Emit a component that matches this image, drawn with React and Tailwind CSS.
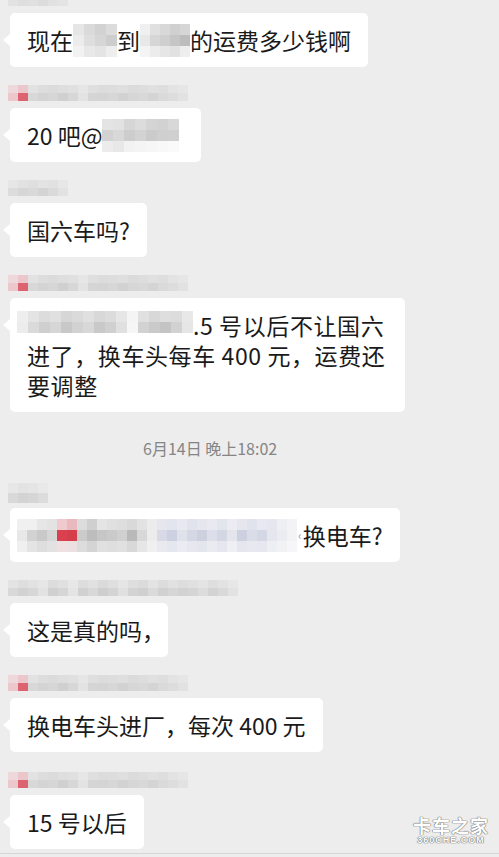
import React from 'react';

// pixelated "mosaic" blocks that hide names in the screenshot
const Mosaic = ({ rows, cell, className = '' }) => (
    <span className={`flex shrink-0 flex-col ${className}`}>
        {rows.map((row, i) => (
            <span key={i} className="flex">
                {row.map((c, j) => (
                    <span key={j} className={`${cell} ${c}`} />
                ))}
            </span>
        ))}
    </span>
);

const nameRed = [
    ['bg-[#efd8db]', 'bg-[#ebc6cb]', 'bg-[#e2e2e2]', 'bg-[#dddddd]', 'bg-[#dbdbdb]', 'bg-[#dedede]', 'bg-[#e0e0e0]', 'bg-[#e6e6e6]', 'bg-[#dfdfdf]', 'bg-[#dcdcdc]', 'bg-[#dddddd]', 'bg-[#dfdfdf]', 'bg-[#dbdbdb]', 'bg-[#dddddd]', 'bg-[#e0e0e0]', 'bg-[#dedede]', 'bg-[#e3e3e3]', 'bg-[#e6e6e6]'],
    ['bg-[#ecc8cc]', 'bg-[#dc6470]', 'bg-[#d8d8d8]', 'bg-[#d4d4d4]', 'bg-[#d6d6d6]', 'bg-[#d0d0d0]', 'bg-[#d7d7d7]', 'bg-[#e3e3e3]', 'bg-[#d5d5d5]', 'bg-[#d4d4d4]', 'bg-[#d7d7d7]', 'bg-[#d2d2d2]', 'bg-[#d6d6d6]', 'bg-[#d8d8d8]', 'bg-[#d4d4d4]', 'bg-[#dadada]', 'bg-[#dddddd]', 'bg-[#e2e2e2]'],
];

const nameTop = [
    ['bg-[#e2e2e2]', 'bg-[#dedede]', 'bg-[#e0e0e0]', 'bg-[#dcdcdc]', 'bg-[#e1e1e1]', 'bg-[#e4e4e4]'],
];

const nameShort = [
    ['bg-[#e6e6e6]', 'bg-[#e2e2e2]', 'bg-[#dfdfdf]', 'bg-[#e3e3e3]', 'bg-[#e1e1e1]', 'bg-[#e7e7e7]'],
    ['bg-[#dcdcdc]', 'bg-[#d6d6d6]', 'bg-[#d9d9d9]', 'bg-[#d4d4d4]', 'bg-[#dadada]', 'bg-[#e2e2e2]'],
];

const nameTiny = [
    ['bg-[#e7e7e7]', 'bg-[#e3e3e3]', 'bg-[#e5e5e5]', 'bg-[#e9e9e9]'],
    ['bg-[#d9d9d9]', 'bg-[#d3d3d3]', 'bg-[#d6d6d6]', 'bg-[#dcdcdc]'],
];

const nameLong = [
    ['bg-[#e3e3e3]', 'bg-[#dedede]', 'bg-[#e2e2e2]', 'bg-[#e6e6e6]', 'bg-[#dcdcdc]', 'bg-[#e0e0e0]', 'bg-[#e7e7e7]', 'bg-[#dddddd]', 'bg-[#e1e1e1]', 'bg-[#dadada]', 'bg-[#dfdfdf]', 'bg-[#e5e5e5]', 'bg-[#dedede]', 'bg-[#dbdbdb]', 'bg-[#e3e3e3]', 'bg-[#dcdcdc]', 'bg-[#e1e1e1]', 'bg-[#dddddd]', 'bg-[#e0e0e0]', 'bg-[#e4e4e4]', 'bg-[#dedede]', 'bg-[#e2e2e2]', 'bg-[#e7e7e7]'],
    ['bg-[#d8d8d8]', 'bg-[#d2d2d2]', 'bg-[#d7d7d7]', 'bg-[#e2e2e2]', 'bg-[#d0d0d0]', 'bg-[#d6d6d6]', 'bg-[#e4e4e4]', 'bg-[#d1d1d1]', 'bg-[#d8d8d8]', 'bg-[#cecece]', 'bg-[#d4d4d4]', 'bg-[#e0e0e0]', 'bg-[#d3d3d3]', 'bg-[#d0d0d0]', 'bg-[#dadada]', 'bg-[#d1d1d1]', 'bg-[#d6d6d6]', 'bg-[#d2d2d2]', 'bg-[#d5d5d5]', 'bg-[#dcdcdc]', 'bg-[#d3d3d3]', 'bg-[#d9d9d9]', 'bg-[#e2e2e2]'],
];

const blurA = [
    ['bg-[#e6e6e6]', 'bg-[#dadada]', 'bg-[#d2d2d2]', 'bg-[#dcdcdc]'],
    ['bg-[#ececec]', 'bg-[#dedede]', 'bg-[#d6d6d6]', 'bg-[#cdcdcd]'],
    ['bg-[#f2f2f2]', 'bg-[#e8e8e8]', 'bg-[#e4e4e4]', 'bg-[#eeeeee]'],
];

const blurB = [
    ['bg-[#f0f0f0]', 'bg-[#e0e0e0]', 'bg-[#d8d8d8]', 'bg-[#d0d0d0]', 'bg-[#d6d6d6]'],
    ['bg-[#e8e8e8]', 'bg-[#d6d6d6]', 'bg-[#cfcfcf]', 'bg-[#c6c6c6]', 'bg-[#bdbdbd]'],
    ['bg-[#f4f4f4]', 'bg-[#ececec]', 'bg-[#e6e6e6]', 'bg-[#e2e2e2]', 'bg-[#eeeeee]'],
];

const blurAt = [
    ['bg-[#e4e4e4]', 'bg-[#e2e2e2]', 'bg-[#d6d6d6]', 'bg-[#dcdcdc]', 'bg-[#d4d4d4]', 'bg-[#d2d2d2]', 'bg-[#d8d8d8]'],
    ['bg-[#d2d2d2]', 'bg-[#d8d8d8]', 'bg-[#cdcdcd]', 'bg-[#d3d3d3]', 'bg-[#cbcbcb]', 'bg-[#cfcfcf]', 'bg-[#d0d0d0]'],
    ['bg-[#ececec]', 'bg-[#e8e8e8]', 'bg-[#f2f2f2]', 'bg-[#f4f4f4]', 'bg-[#f6f6f6]', 'bg-[#f8f8f8]', 'bg-[#fafafa]'],
];

const blurMention = [
    ['bg-[#eeeeee]', 'bg-[#e4e4e4]', 'bg-[#dcdcdc]', 'bg-[#e0e0e0]', 'bg-[#d6d6d6]', 'bg-[#dadada]', 'bg-[#e0e0e0]', 'bg-[#d8d8d8]', 'bg-[#dcdcdc]', 'bg-[#e6e6e6]', 'bg-[#f4f4f4]', 'bg-[#e0e0e0]', 'bg-[#d8d8d8]', 'bg-[#dedede]', 'bg-[#dcdcdc]', 'bg-[#e8e8e8]'],
    ['bg-[#ececec]', 'bg-[#dadada]', 'bg-[#cfcfcf]', 'bg-[#d6d6d6]', 'bg-[#c8c8c8]', 'bg-[#d2d2d2]', 'bg-[#d8d8d8]', 'bg-[#c9c9c9]', 'bg-[#d0d0d0]', 'bg-[#e0e0e0]', 'bg-[#f6f6f6]', 'bg-[#d2d2d2]', 'bg-[#cacaca]', 'bg-[#c4c4c4]', 'bg-[#d2d2d2]', 'bg-[#e6e6e6]'],
];

const blurQuote = [
    ['bg-[#f0f0f0]', 'bg-[#f0f0f0]', 'bg-[#e6e6e6]', 'bg-[#e3e3e3]', 'bg-[#f0c9cf]', 'bg-[#eab9c0]', 'bg-[#dcdcdc]', 'bg-[#cfcfcf]', 'bg-[#e4e4e4]', 'bg-[#e0e0e0]', 'bg-[#dedede]', 'bg-[#d9d9d9]', 'bg-[#e2e2e2]', 'bg-[#ececec]', 'bg-[#e6e7ee]', 'bg-[#e3e5ee]', 'bg-[#e8e9f0]', 'bg-[#e0e2ec]', 'bg-[#e6e7ee]', 'bg-[#e9eaf1]', 'bg-[#e3e5ed]', 'bg-[#ebebf1]', 'bg-[#e6e7ee]', 'bg-[#e1e3ec]', 'bg-[#e8e9f0]', 'bg-[#e5e6ee]', 'bg-[#eeeff3]', 'bg-[#f3f3f6]'],
    ['bg-[#e8e8e8]', 'bg-[#d2d2d2]', 'bg-[#c9c9c9]', 'bg-[#d6d6d6]', 'bg-[#d9414f]', 'bg-[#d63e4c]', 'bg-[#cbcbcb]', 'bg-[#bdbdbd]', 'bg-[#c6c6c6]', 'bg-[#cacaca]', 'bg-[#d0d0d0]', 'bg-[#b9b9b9]', 'bg-[#d8d8d8]', 'bg-[#ececec]', 'bg-[#d7d9e6]', 'bg-[#ccd0e0]', 'bg-[#dfe1eb]', 'bg-[#d4d7e4]', 'bg-[#ccd0df]', 'bg-[#dcdfea]', 'bg-[#d3d6e3]', 'bg-[#e3e4ec]', 'bg-[#ccd0df]', 'bg-[#dadde8]', 'bg-[#d4d7e4]', 'bg-[#e5e6ee]', 'bg-[#ebecf1]', 'bg-[#f3f3f6]'],
    ['bg-[#f0f0f0]', 'bg-[#e4e4e4]', 'bg-[#dedede]', 'bg-[#e2e2e2]', 'bg-[#efe0e2]', 'bg-[#ece0e1]', 'bg-[#dcdcdc]', 'bg-[#d4d4d4]', 'bg-[#e0e0e0]', 'bg-[#dedede]', 'bg-[#e0e0e0]', 'bg-[#d8d8d8]', 'bg-[#e6e6e6]', 'bg-[#f0f0f0]', 'bg-[#e9eaf0]', 'bg-[#e5e7ee]', 'bg-[#ebecf1]', 'bg-[#e7e8ef]', 'bg-[#e4e6ed]', 'bg-[#eaebf1]', 'bg-[#e6e7ee]', 'bg-[#eeeef3]', 'bg-[#e6e7ee]', 'bg-[#e8e9f0]', 'bg-[#e7e8ef]', 'bg-[#eeeff3]', 'bg-[#f2f2f5]', 'bg-[#f6f6f8]'],
];

const Bubble = ({ children, className = '' }) => (
    <div className={`relative ml-[10px] rounded-[5px] bg-white px-[17px] py-[12px] text-[23px] text-[#1a1a1a] ${className}`}>
        <span className="absolute left-[-7px] top-[21px] h-0 w-0 border-y-[6px] border-r-[7px] border-y-transparent border-r-white" />
        {children}
    </div>
);

const Line = ({ children }) => (
    <div className="flex h-[30px] items-center whitespace-pre leading-[30px]">{children}</div>
);

const Name = ({ rows, cell = 'w-[10px] h-[8px]', className = 'mt-[18px] mb-[7px]' }) => (
    <div className={`ml-[8px] flex ${className}`}>
        <Mosaic rows={rows} cell={cell} />
    </div>
);

const App = () => {
    return (
        <div className="relative flex h-[857px] flex-col overflow-hidden bg-[#ededed] font-['Noto_Sans_CJK_SC',sans-serif]">
            <Name rows={nameTop} cell="w-[10px] h-[6px]" className="mb-[7px]" />
            <Bubble className="w-fit">
                <Line>
                    现在
                    <Mosaic rows={blurA} cell="w-[11px] h-[11px]" />
                    到
                    <Mosaic rows={blurB} cell="w-[10px] h-[11px]" />
                    的运费多少钱啊
                </Line>
            </Bubble>

            <Name rows={nameRed} />
            <Bubble className="w-fit pr-[22px]">
                <Line>
                    20 吧@
                    <Mosaic rows={blurAt} cell="w-[11px] h-[11px]" />
                </Line>
            </Bubble>

            <Name rows={nameShort} />
            <Bubble className="w-fit">
                <Line>国六车吗?</Line>
            </Bubble>

            <Name rows={nameRed} />
            <Bubble className="w-[395px] tracking-[0.6px]">
                <Line>
                    <Mosaic rows={blurMention} cell="w-[11px] h-[11px]" className="-ml-[10px] -mt-[6px]" />
                    .5 号以后不让国六
                </Line>
                <Line>进了，换车头每车 400 元，运费还</Line>
                <Line>要调整</Line>
            </Bubble>

            <div className="mt-[26px] pl-[143px] text-[16px] leading-[20px] text-[#858585]">
                6月14日 晚上18:02
            </div>

            <Name rows={nameTiny} cell="w-[10px] h-[10px]" className="mt-[25px] mb-[5px]" />
            <Bubble className="w-fit">
                <Line>
                    <Mosaic rows={blurQuote} cell="w-[10px] h-[11px]" className="-ml-[10px]" />
                    <span className="mx-[1px] text-[12px] text-[#9a9a9a]">‹</span>
                    换电车?
                </Line>
            </Bubble>

            <Name rows={nameLong} />
            <Bubble className="w-fit">
                <Line>
                    这是真的吗
                    <span className="w-[9px]">，</span>
                </Line>
            </Bubble>

            <Name rows={nameRed} />
            <Bubble className="w-fit">
                <Line>换电车头进厂，每次 400 元</Line>
            </Bubble>

            <Name rows={nameRed} className="mt-[20px] mb-[7px]" />
            <Bubble className="w-fit">
                <Line>15 号以后</Line>
            </Bubble>

            <div className="mt-[4px] h-px bg-[#d6d6d6]" />

            <div className="absolute bottom-[12px] right-[10px] flex flex-col items-center text-white [text-shadow:0_0_1px_#6f6f6f,0_0_1px_#6f6f6f,0_0_1px_#6f6f6f]">
                <span className="text-[18px] font-bold leading-[19px] tracking-[1px]">卡车之家</span>
                <span className="font-['Liberation_Sans',sans-serif] text-[9px] font-bold leading-[10px] tracking-[1px]">360CHE.COM</span>
            </div>
        </div>
    );
};

export default App;
